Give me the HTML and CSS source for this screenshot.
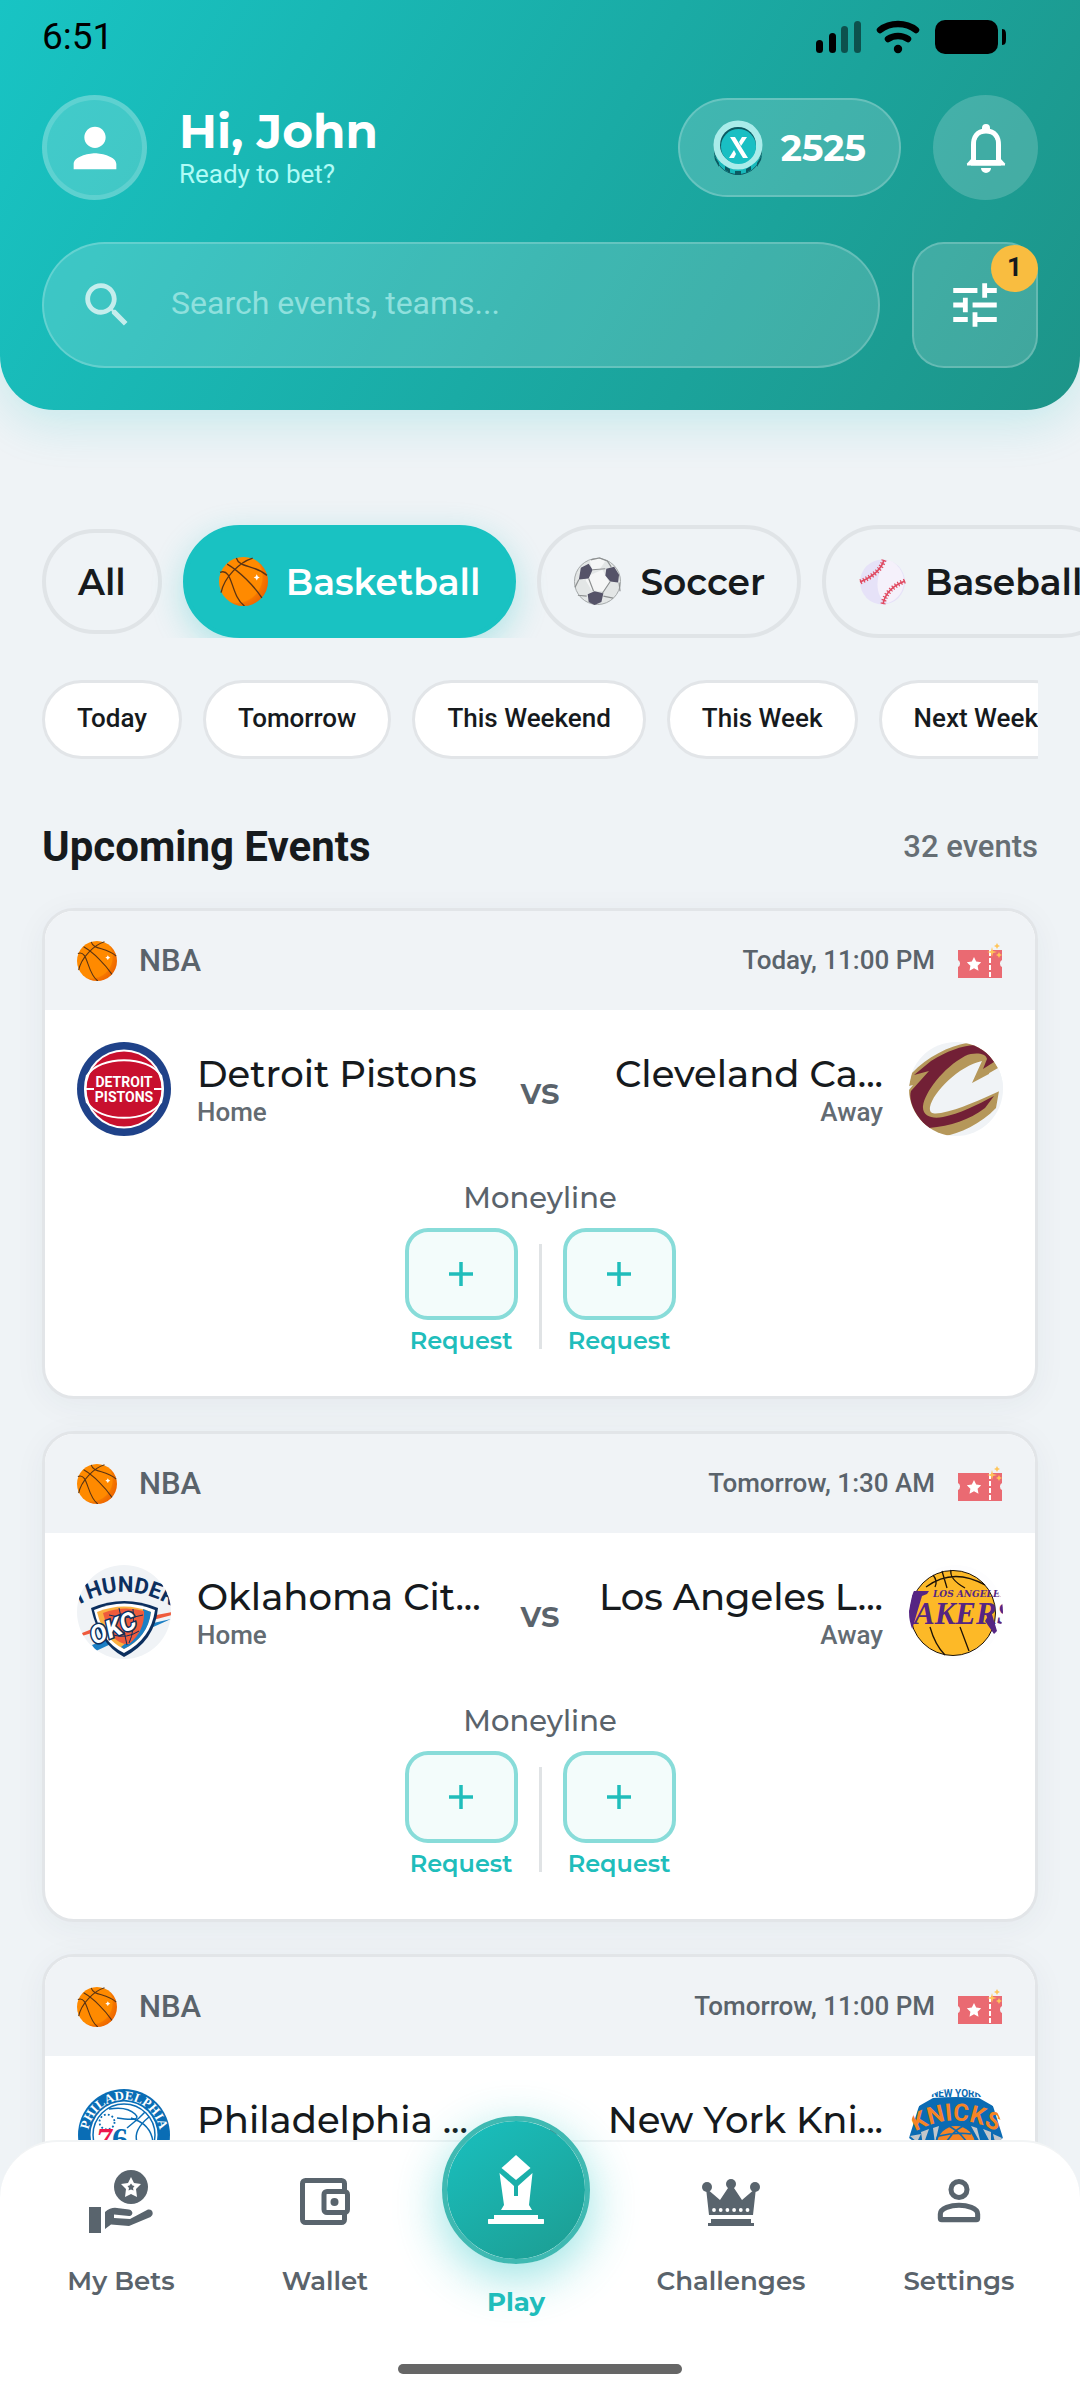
FILE: index.html
```html
<!DOCTYPE html>
<html lang="en">
<head>
<meta charset="utf-8">
<meta name="viewport" content="width=device-width, initial-scale=1">
<title>Upcoming Events</title>
<link rel="stylesheet" href="styles.css">
</head>
<body>
<svg class="sprite" aria-hidden="true">
  <defs>
    <radialGradient id="ballFill" cx="0.35" cy="0.4" r="0.75">
      <stop offset="0.7" stop-color="#ff8a00"/><stop offset="0.74" stop-color="#f57600"/><stop offset="0.9" stop-color="#ee6500"/><stop offset="1" stop-color="#dd5000"/>
    </radialGradient>
    <clipPath id="disc"><circle cx="47" cy="47" r="47"/></clipPath>
  </defs>
  <symbol id="basketball" viewBox="0 0 48 48">
    <circle cx="24" cy="24" r="24" fill="url(#ballFill)"/>
    <g fill="none" stroke="#5b3413" stroke-width="1.3">
      <path d="M8 7C20 14 34 28 42 40M33 1C20 5 5 20 2 35M1 15C14 10 11 38 25 48M17 1C20 11 34 7 47 18"/>
    </g>
    <path d="M37 17l1 2 2 1-2 1-1 2-1-2-2-1 2-1z" fill="#fff"/>
  </symbol>
  <symbol id="ticket" viewBox="0 0 46 36">
    <path d="M1 7h31v28H1v-11a4 4 0 0 0 0-7zM34 7h11v10a4 4 0 0 0 0 7v11H34z" fill="#ea6a72"/>
    <path d="M33 8v27" stroke="#ea6a72" stroke-width="2"/>
    <path d="M33 8v27" stroke="#fff" stroke-width="2" stroke-dasharray="5 2"/>
    <path d="M17 14l2.200 4.500 5 .7-3.600 3.500.9 5-4.500-2.400-4.500 2.400.9-5-3.600-3.500 5-.7z" fill="#fff"/>
    <path d="M35 4l1 4 4 1-4 1-1 4-1-4-4-1 4-1zM40 0l1 2 2 1-2 1-1 2-1-2-2-1 2-1zM42 9l1 2 2 1-2 1-1 2-1-2-2-1 2-1z" fill="#ffc55a"/>
  </symbol>
  <symbol id="plus" viewBox="0 0 26 26"><path d="M13 1v24M1 13h24" stroke="#20bdbb" stroke-width="3.500"/></symbol>
</svg>

<div class="app">
  <header class="header">
    <div class="status">
      <span class="clock">6:51</span>
      <div class="status-icons">
        <svg width="45" height="34" viewBox="0 0 45 34" aria-label="Signal"><rect x="0" y="20" width="7" height="13" rx="3.500"/><rect x="13" y="13" width="7" height="20" rx="3.500"/><g opacity=".5"><rect x="25" y="6" width="7" height="27" rx="3.500"/><rect x="38" y="1" width="7" height="32" rx="3.500"/></g></svg>
        <svg width="44" height="34" viewBox="0 0 44 34" aria-label="Wi-Fi"><path d="M4 10C14 2 30 2 40 10M12 19C18 15 26 15 32 19" fill="none" stroke="#000" stroke-width="6.500" stroke-linecap="round"/><circle cx="22" cy="29" r="4.200"/></svg>
        <svg width="71" height="34" viewBox="0 0 71 34" aria-label="Battery"><rect width="63" height="34" rx="10"/><path d="M67 9c4 0 4 3 4 8s0 8-4 8z"/></svg>
      </div>
    </div>
    <div class="profile">
      <button class="avatar" aria-label="Profile"><svg width="64" height="64" viewBox="0 0 24 24" fill="#fff"><path d="M12 12c2.210 0 4-1.790 4-4s-1.790-4-4-4-4 1.790-4 4 1.790 4 4 4zm0 2c-2.670 0-8 1.340-8 4v2h16v-2c0-2.660-5.330-4-8-4z"/></svg></button>
      <div class="greeting">
        <h1>Hi, John</h1>
        <p>Ready to bet?</p>
      </div>
      <button class="coins">
        <svg width="50" height="55" viewBox="0 0 50 55" aria-hidden="true">
          <path d="M1 27a24 25 0 0 0 48 0v3a24 25 0 0 1-48 0z" fill="#0b4f57"/>
          <path d="M1 35C6 48 14 54 25 54s19-6 24-19l-5 6H6z" fill="#17b9bb"/>
          <path d="M12 50l5 3v-4l-5-3zM22 51h6v4h-6zM38 50l-5 3v-4l5-3zM1 35l5 8v4L2 40zM49 35l-5 8v4l4-7z" fill="#0b5a62"/>
          <circle cx="25" cy="25" r="24.500" fill="#a9ecea"/>
          <circle cx="25" cy="25" r="18" fill="#0b5a62"/>
          <circle cx="25.500" cy="26.500" r="17.500" fill="#19bfc3"/>
          <path d="M17 17h5l13 21h-5zM29 17h5l-6 9-2-4zM16 38l5-8 2 4-2 4z" fill="#fff"/>
        </svg>
        <span>2525</span>
      </button>
      <button class="bell" aria-label="Notifications">
        <svg width="40" height="50" viewBox="0 0 40 50" fill="none"><path d="M20 8c-9 0-12.500 6-12.500 14v18h25V22C32.500 14 29 8 20 8z" stroke="#fff" stroke-width="5"/><path d="M1 42.500v-2L6 35h28l5 5.500v2z" fill="#fff"/><path d="M10 22c0-7 3-11 10-11s10 4 10 11v15H10z" fill="#40aca4"/><path d="M16 8V5a4 4 0 0 1 8 0v3zM15 45h10a5 5 0 0 1-10 0z" fill="#fff"/></svg>
      </button>
    </div>
    <div class="search-row">
      <label class="search">
        <svg width="58" height="58" viewBox="0 0 24 24" fill="#fff" aria-hidden="true"><path d="M15.500 14h-.79l-.28-.27C15.410 12.590 16 11.110 16 9.500 16 5.910 13.090 3 9.500 3S3 5.910 3 9.500 5.910 16 9.500 16c1.610 0 3.090-.59 4.230-1.570l.27.28v.79l5 4.990L20.490 19l-4.990-5zm-6 0C7.010 14 5 11.990 5 9.500S7.010 5 9.500 5 14 7.010 14 9.500 11.990 14 9.500 14z"/></svg>
        <input type="text" placeholder="Search events, teams..." aria-label="Search events, teams">
      </label>
      <button class="filter" aria-label="Filters">
        <svg width="58" height="58" viewBox="0 0 24 24" fill="#fff"><path d="M3 17v2h6v-2H3zM3 5v2h10V5H3zm10 16v-2h8v-2h-8v-2h-2v6h2zM7 9v2H3v2h4v2h2V9H7zm14 4v-2H11v2h10zm-6-4h2V7h4V5h-4V3h-2v6z"/></svg>
        <span class="badge">1</span>
      </button>
    </div>
  </header>

  <main class="main">
    <div class="sports">
      <button class="sport sport-all">All</button>
      <button class="sport sport-active"><svg width="49" height="49"><use href="#basketball"/></svg>Basketball</button>
      <button class="sport">
        <svg width="49" height="49" viewBox="0 0 48 50">
          <circle cx="24" cy="25" r="23.500" fill="#e3e6e6" stroke="#a3a7a8"/>
          <path d="M16 3l9-2 7 3-6 9-8-1zM13 20l16-7 7 13-6 9-12-1-6-10z" fill="#f5f6f6"/>
          <path d="M7 11l8-4 4 6-4 9-10 1zM33 12l8-2 5 8-1 8-8-1-5-6zM14 38l7-3 9 2-2 9-7 3-6-3z" fill="#555368"/>
          <path d="M19 13l13 -1M15 22l5 13M37 25l-8 12M5 23L1 31M13 40L4 39M46 26l1 9M30 40l10 2M17 3l9-2 8 3 4 6" fill="none" stroke="#8d9091" stroke-width="1.200"/>
        </svg>Soccer</button>
      <button class="sport">
        <svg width="49" height="49" viewBox="0 0 49 49">
          <circle cx="24.500" cy="25" r="22.500" fill="#e6e2f8"/><path d="M30 3a22.500 22.500 0 0 1 0 43C16 42 16 15 30 3z" fill="#f5f1fb"/>
          <g fill="none" stroke="#e04a61"><path d="M26 3C23 13 14 20 2 25M25 47C27 37 34 29 47 24" stroke-width="1.600"/><path d="M26 3C23 13 14 20 2 25M25 47C27 37 34 29 47 24" stroke-width="5" stroke-dasharray="1.200 2"/></g>
        </svg>Baseball</button>
    </div>

    <div class="dates">
      <button class="date">Today</button>
      <button class="date">Tomorrow</button>
      <button class="date">This Weekend</button>
      <button class="date">This Week</button>
      <button class="date">Next Week</button>
    </div>

    <div class="section-head">
      <h2>Upcoming Events</h2>
      <span>32 events</span>
    </div>

    <div class="events">
      <article class="card">
        <div class="card-head">
          <svg width="40" height="40"><use href="#basketball"/></svg>
          <span class="league">NBA</span>
          <time>Today, 11:00 PM</time>
          <svg width="46" height="36"><use href="#ticket"/></svg>
        </div>
        <div class="card-body">
          <div class="teams">
            <div class="team">
              <svg class="logo" viewBox="0 0 94 94" role="img" aria-label="Detroit Pistons">
                <circle cx="47" cy="47" r="47" fill="#1f4289"/><circle cx="47" cy="47" r="39.500" fill="#fff"/><circle cx="47" cy="47" r="37.500" fill="#c8102e"/>
                <path d="M10 34C22 13 72 13 84 34M10 60C22 81 72 81 84 60M10 33Q6 47 10 61M84 33Q88 47 84 61M9 47h8M77 47h8" fill="none" stroke="#fff" stroke-width="2"/>
                <text x="47" y="45" class="lg-pistons">DETROIT</text><text x="47" y="60" class="lg-pistons">PISTONS</text>
              </svg>
              <div class="team-text"><h3>Detroit Pistons</h3><p>Home</p></div>
            </div>
            <span class="vs">vs</span>
            <div class="team team-away">
              <div class="team-text"><h3>Cleveland Ca...</h3><p>Away</p></div>
              <svg class="logo" viewBox="0 0 94 94" role="img" aria-label="Cleveland Cavaliers">
                <g clip-path="url(#disc)"><rect width="94" height="94" fill="#f0f3f6"/>
                <path d="M2 35L3 31C18 15 40 4 58 1L67 2Q80 10 89 26L63 41L73 19L90 49L87 66C72 82 50 92 35 94L16 88C2 76-3 58 0 48L4 43L0 44Z" fill="#b5975a"/>
                <path d="M5 33L22 19C38 9 52 4 66 3L78 10L85 20L74 27L78 17C77 11 65 10 56 14C34 26 16 50 14 64C13 75 24 77 34 75C50 72 68 63 85 54L76 66C60 78 42 84 20 86C6 75-1 58 2 49L20 29Z" fill="#722036"/>
                <path d="M73 19C50 24 24 50 21 65C20 72 25 72 32 71C52 67 70 58 95 47L95 24L63 41Z" fill="#f0f3f6"/></g>
              </svg>
            </div>
          </div>
          <p class="market">Moneyline</p>
          <div class="odds">
            <div class="odd"><button aria-label="Request home odds"><svg width="26" height="26"><use href="#plus"/></svg></button><span>Request</span></div>
            <div class="divider"></div>
            <div class="odd"><button aria-label="Request away odds"><svg width="26" height="26"><use href="#plus"/></svg></button><span>Request</span></div>
          </div>
        </div>
      </article>

      <article class="card">
        <div class="card-head">
          <svg width="40" height="40"><use href="#basketball"/></svg>
          <span class="league">NBA</span>
          <time>Tomorrow, 1:30 AM</time>
          <svg width="46" height="36"><use href="#ticket"/></svg>
        </div>
        <div class="card-body">
          <div class="teams">
            <div class="team">
              <svg class="logo" viewBox="0 0 94 94" role="img" aria-label="Oklahoma City Thunder">
                <g clip-path="url(#disc)"><rect width="94" height="94" fill="#f0f3f6"/>
                <path id="arcT" d="M-8 46Q47 8 102 46" fill="none"/>
                <text class="lg-thunder"><textPath href="#arcT" startOffset="50%">THUNDER</textPath></text>
                <path d="M5 68L20 62L18 67L5 71zM74 51L95 47V50L76 55z" fill="#ef5b3c"/><path d="M15 80L40 70L36 78L19 86zM72 59L94 54L74 63z" fill="#1b7fc4"/>
                <path d="M14 43Q47 29 81 43Q78 76 47 92Q22 79 14 43z" fill="#0c2f5e"/><path d="M17 45Q47 32 78 45Q74 74 47 88Q24 77 17 45z" fill="#fff"/>
                <path d="M20 47Q47 36 74 47Q70 73 47 84Q27 75 20 47z" fill="#fbb040"/><path d="M66 44L74 47Q71 72 47 84L44 82Q66 66 66 44z" fill="#1b7fc4"/>
                <path d="M26 48Q46 40 67 46Q68 66 52 79Q44 80 36 72Q29 60 26 48z" fill="#ef5b3c"/>
                <path d="M42 43L50 80M32 50Q50 55 66 50M56 44Q58 66 52 78M36 70Q50 74 62 66" stroke="#0c2f5e" fill="none"/>
                <text x="17" y="80" class="lg-okc" transform="rotate(-22 17 80)">OKC</text></g>
              </svg>
              <div class="team-text"><h3>Oklahoma Cit...</h3><p>Home</p></div>
            </div>
            <span class="vs">vs</span>
            <div class="team team-away">
              <div class="team-text"><h3>Los Angeles L...</h3><p>Away</p></div>
              <svg class="logo" viewBox="0 0 94 94" role="img" aria-label="Los Angeles Lakers">
                <g clip-path="url(#disc)"><rect width="94" height="94" fill="#fdfdfe"/>
                <circle cx="44" cy="48" r="42.500" fill="#fdb927" stroke="#1c1208"/>
                <path d="M17 22Q44 2 76 20M24 10Q29 16 26 22M33 6L38 23M42 5Q40 14 56 23M21 62Q26 80 36 90M51 62L60 86" fill="none" stroke="#1c1208" stroke-width="1.300"/>
                <path d="M4 26h16l-2 3-5 2L2 68l-5-8zM82 46l6 20-3 3-9-13z" fill="#552583"/>
                <text x="5" y="59" class="lg-lakers">AKERS</text><text x="24" y="32" class="lg-la">LOS ANGELES</text></g>
              </svg>
            </div>
          </div>
          <p class="market">Moneyline</p>
          <div class="odds">
            <div class="odd"><button aria-label="Request home odds"><svg width="26" height="26"><use href="#plus"/></svg></button><span>Request</span></div>
            <div class="divider"></div>
            <div class="odd"><button aria-label="Request away odds"><svg width="26" height="26"><use href="#plus"/></svg></button><span>Request</span></div>
          </div>
        </div>
      </article>

      <article class="card">
        <div class="card-head">
          <svg width="40" height="40"><use href="#basketball"/></svg>
          <span class="league">NBA</span>
          <time>Tomorrow, 11:00 PM</time>
          <svg width="46" height="36"><use href="#ticket"/></svg>
        </div>
        <div class="card-body">
          <div class="teams">
            <div class="team">
              <svg class="logo" viewBox="0 0 94 94" role="img" aria-label="Philadelphia 76ers">
                <circle cx="47" cy="47" r="46" fill="#0a6db5"/><circle cx="47" cy="47" r="33.500" fill="#fff"/><circle cx="47" cy="47" r="31" fill="none" stroke="#0a6db5" stroke-width="1.500"/>
                <path id="arcP" d="M11.500 54A36 36 0 1 1 82.500 54" fill="none"/>
                <text class="lg-phila"><textPath href="#arcP" startOffset="50%">PHILADELPHIA</textPath></text>
                <path d="M32 21Q50 18 58 26T40 30M72 29Q56 42 60 54M54 30Q74 36 76 54M50 40L62 30L68 24" fill="none" stroke="#0a6db5" stroke-width="1.500"/>
                <circle cx="30" cy="34" r="7.500" fill="none" stroke="#0a6db5" stroke-width="1.800" stroke-dasharray="1.800 2.200"/>
                <text x="19" y="62" class="lg-seven">7</text><text x="35" y="62" class="lg-six">6</text><text x="54" y="62" class="lg-ers">ers</text>
              </svg>
              <div class="team-text"><h3>Philadelphia ...</h3><p>Home</p></div>
            </div>
            <span class="vs">vs</span>
            <div class="team team-away">
              <div class="team-text"><h3>New York Kni...</h3><p>Away</p></div>
              <svg class="logo" viewBox="0 0 94 94" role="img" aria-label="New York Knicks">
                <g clip-path="url(#disc)">
                <path d="M0 50L10 18L24 10Q47 8 70 10L84 18L94 50L80 60H14z" fill="#0b6bb3"/>
                <path d="M1 48L8 54L12 46zM12 44l8-3-6 17zM24 40l6-2-4 18zM62 38l6 2 4 16zM74 41l8 3 0 12zM84 46l9 4-6 8z" fill="#c2c6ca"/>
                <path id="arcK" d="M-4 50Q47 15 98 50" fill="none"/>
                <text class="lg-knicks"><textPath href="#arcK" startOffset="50%">KNICKS</textPath></text>
                <text x="47" y="9" class="lg-ny">NEW YORK</text>
                <circle cx="47" cy="57" r="20" fill="#f58426" stroke="#0b6bb3" stroke-width="2"/>
                <path d="M30 48Q46 44 62 46M40 38Q54 46 60 58M54 38Q42 44 34 60" fill="none" stroke="#0b6bb3" stroke-width="1.500"/></g>
              </svg>
            </div>
          </div>
          <p class="market">Moneyline</p>
          <div class="odds">
            <div class="odd"><button aria-label="Request home odds"><svg width="26" height="26"><use href="#plus"/></svg></button><span>Request</span></div>
            <div class="divider"></div>
            <div class="odd"><button aria-label="Request away odds"><svg width="26" height="26"><use href="#plus"/></svg></button><span>Request</span></div>
          </div>
        </div>
      </article>
    </div>
  </main>

  <nav class="tabs">
    <div class="tab-grid">
      <a class="tab" href="#bets">
        <svg width="64" height="64" viewBox="0 0 64 64" fill="#59646d"><circle cx="42" cy="17" r="17"/><path d="M42 7l3 6 7 1-5 5 1 8-6-3-6 3 1-8-5-5 7-1z" fill="#fff"/><path d="M42 13.500l1.500 2 2 .5-1.500 2 .5 2.500-2.500-1-2.500 1 .5-2.500-1.500-2 2-.5z"/><path d="M0 37h12v26H0zM16 59V42q6-5 12-4l12 1.500c5 1 4 7 0 6.500l-15-1.500v3.500l16 1 17-9c5-2 8 4 3.500 7L40 56l-18-1.500z"/></svg>
        <span>My Bets</span>
      </a>
      <a class="tab" href="#wallet">
        <svg width="50" height="64" viewBox="0 -8 50 64" fill="none" stroke="#59646d" stroke-width="5"><path d="M44.500 12V5.500a3 3 0 0 0-3-3h-36a3 3 0 0 0-3 3v36a3 3 0 0 0 3 3h36a3 3 0 0 0 3-3V36"/><rect x="24" y="13.500" width="23.500" height="21" rx="3"/><circle cx="34.500" cy="24" r="4" fill="#59646d" stroke="none"/></svg>
        <span>Wallet</span>
      </a>
      <a class="tab tab-play" href="#play">
        <div class="play-disc"><svg width="56" height="70" viewBox="0 0 56 70" fill="#fff"><path d="M28 0l14.500 13L28 25 13.500 13z"/><path d="M11.500 18L26 31v10h4V31l14.500-13L41 50l3 5H13l3-5z"/><path d="M6 60h44v4h5a2.500 2.500 0 0 1 0 5H1a2.500 2.500 0 0 1 0-5h5z"/></svg></div>
        <span>Play</span>
      </a>
      <a class="tab" href="#challenges">
        <svg width="58" height="64" viewBox="0 -9 58 64" fill="#59646d"><circle cx="5" cy="8" r="5"/><circle cx="29" cy="5" r="5"/><circle cx="53" cy="8" r="5"/><path d="M4 9l14 12L28 6h2l10 15L54 9l-3 27H7z"/><path d="M9 40h40v4h3v3H6v-3h3z"/><path d="M12 31h36" stroke="#fff" stroke-width="3.800" stroke-linecap="round" stroke-dasharray="0 6.700"/></svg>
        <span>Challenges</span>
      </a>
      <a class="tab" href="#settings">
        <svg width="64" height="64" viewBox="0 0 24 24" fill="none" stroke="#59646d" stroke-width="1.900"><circle cx="12" cy="7.300" r="3"/><path d="M5 16.500c0-2.200 4-3.300 7-3.300s7 1.100 7 3.300v1.600a.5.5 0 0 1-.5.5h-13a.5.5 0 0 1-.5-.5z"/></svg>
        <span>Settings</span>
      </a>
    </div>
    <div class="home-bar"></div>
  </nav>
</div>
</body>
</html>
```
FILE: styles.css
```css
* { box-sizing: border-box; margin: 0; padding: 0; }

:root {
  --ink: #161a1d;
  --muted: #5a636b;
  --teal: #19c2c2;
  --line: #e0e4e7;
  --bg: #eff3f6;
  --display: Montserrat, Inter, "Open Sans", sans-serif;
  --text: Roboto, "Noto Sans", sans-serif;
}

body { background: var(--bg); color: var(--ink); font-family: var(--text); }
button { border: 0; background: none; font: inherit; color: inherit; display: flex; align-items: center; justify-content: center; flex: none; }
a { color: inherit; text-decoration: none; }
svg { display: block; flex: none; }
.sprite { position: absolute; width: 0; height: 0; }

.app { position: relative; height: 100vh; overflow: hidden; }

/* Header */
.header {
  position: relative;
  padding: 0 42px 42px;
  border-radius: 0 0 54px 54px;
  background: linear-gradient(120deg, #18c4c4 0%, #1aaba5 52%, #1d9488 100%);
  box-shadow: 0 12px 48px rgba(25, 194, 194, .2);
}
.status { display: flex; justify-content: space-between; height: 95px; padding-top: 16px; color: #000; }
.clock { font-size: 37px; line-height: 42px; }
.status-icons { display: flex; gap: 15px; padding: 4px 32px 0 0; }

.profile { display: flex; align-items: center; gap: 32px; }
.avatar, .bell { width: 105px; height: 105px; border-radius: 50%; background: rgba(255, 255, 255, .18); }
.avatar { border: 5px solid rgba(255, 255, 255, .15); }
.greeting { flex: 1; color: #fff; }
.greeting h1 { font: 700 47px/52px var(--display); }
.greeting p { font-size: 26px; line-height: 32px; color: #b0fbf6; }
.coins {
  height: 99px; padding: 0 33px; gap: 18px; border-radius: 50px;
  background: rgba(255, 255, 255, .17); border: 2px solid rgba(255, 255, 255, .2);
  color: #fff; font: 700 36px/44px var(--display);
}

.search-row { display: flex; gap: 32px; margin-top: 42px; }
.search {
  flex: 1; display: flex; align-items: center; gap: 35px; height: 126px; padding: 0 34px; border-radius: 63px;
  background: rgba(255, 255, 255, .16); border: 2px solid rgba(255, 255, 255, .2);
}
.search svg { opacity: .7; }
.search input { flex: 1; min-width: 0; padding-bottom: 4px; border: 0; background: none; outline: 0; color: #fff; font: 400 32px/40px var(--text); }
.search input::placeholder { color: #8fe0dd; opacity: 1; }
.filter {
  position: relative; width: 126px; height: 126px; border-radius: 32px;
  background: rgba(255, 255, 255, .16); border: 2px solid rgba(255, 255, 255, .2);
}
.badge {
  position: absolute; top: 1px; right: -2px; width: 47px; height: 47px; border-radius: 50%;
  background: #f9bd40; color: var(--ink); font-size: 26px; font-weight: 700; line-height: 45px; text-align: center;
}

/* Filters */
.sports { display: flex; align-items: center; gap: 21px; padding: 115px 0 0 42px; overflow: hidden; }
.sport {
  height: 113px; padding: 0 32px; gap: 18px; border: 4px solid var(--line); border-radius: 57px;
  font: 600 36px/44px var(--display); white-space: nowrap;
}
.sport-all { height: 105px; }
.sport-active { background: #19c2c2; border-color: #19c2c2; color: #fff; box-shadow: 0 10px 32px rgba(25, 194, 194, .3); }

.dates { display: flex; gap: 21px; margin: 42px 42px 0; overflow: hidden; }
.date {
  height: 79px; padding: 0 32px 4px; border: 3px solid #e2e5e8; border-radius: 40px; background: #fff;
  font-size: 26px; font-weight: 500; line-height: 32px; white-space: nowrap;
}

.section-head { display: flex; align-items: center; justify-content: space-between; margin: 63px 42px 36px; }
.section-head h2 { font-size: 42px; font-weight: 700; line-height: 50px; }
.section-head span { font-size: 31px; font-weight: 500; line-height: 50px; color: #666e74; }

/* Event cards */
.events { display: flex; flex-direction: column; gap: 32px; padding: 0 42px; }
.card { border: 3px solid #e2e5e8; border-radius: 32px; background: #fff; overflow: hidden; box-shadow: 0 6px 32px rgba(40, 60, 80, .05); }
.card-head { display: flex; align-items: center; gap: 22px; height: 99px; padding: 0 32px; background: #f0f3f6; color: var(--muted); font-weight: 500; }
.league { flex: 1; font-size: 31px; }
.card-head time { font-size: 26px; padding-bottom: 2px; }
.card-body { padding: 32px 32px 40px; }
.teams { display: flex; align-items: center; }
.team { flex: 1; display: flex; align-items: center; gap: 26px; min-width: 0; }
.team-away { justify-content: flex-end; text-align: right; }
.team h3 { font: 500 37px/46px var(--display); white-space: nowrap; }
.team p { font-size: 26px; font-weight: 500; line-height: 30px; color: #636b72; }
.logo { width: 94px; height: 94px; }
.vs { padding-top: 4px; font: 600 36px/40px var(--display); color: var(--muted); }
.market { margin-top: 44px; text-align: center; font: 500 29px/36px var(--display); color: var(--muted); }
.odds { display: flex; justify-content: center; gap: 21px; margin-top: 12px; }
.odd { display: flex; flex-direction: column; align-items: center; gap: 6px; width: 113px; }
.odd button { width: 113px; height: 92px; border: 4px solid #88dcd9; border-radius: 23px; background: #f3fcfb; }
.odd span { font: 600 24px/30px var(--display); color: #20bdbb; }
.divider { width: 3px; height: 105px; margin-top: 16px; background: #e0e3e5; }

/* Lettering inside team logos */
.lg-pistons { font: 700 14px Roboto, sans-serif; fill: #fff; text-anchor: middle; }
.lg-thunder { font: 700 22px Roboto, sans-serif; fill: #0c2f5e; text-anchor: middle; }
.lg-okc { font: italic 700 25px Roboto, sans-serif; fill: #fff; stroke: #0c2f5e; stroke-width: 3px; paint-order: stroke; }
.lg-lakers { font: italic 700 31px "Liberation Serif", serif; fill: #552583; }
.lg-la { font: italic 700 9px "DejaVu Serif", serif; fill: #552583; }
.lg-phila { font: 700 13px "Liberation Serif", serif; fill: #fff; text-anchor: middle; }
.lg-seven { font: italic 700 32px "Liberation Serif", serif; fill: #ed174c; }
.lg-six { font: 700 32px "Liberation Serif", serif; fill: #0a6db5; }
.lg-ers { font: 700 16px "Liberation Serif", serif; fill: #0a6db5; }
.lg-knicks { font: 700 24px Roboto, sans-serif; fill: #f58426; text-anchor: middle; }
.lg-ny { font: 700 10px Roboto, sans-serif; fill: #0b6bb3; text-anchor: middle; }

/* Bottom tabs */
.tabs {
  position: absolute; left: 0; right: 0; bottom: 0;
  padding: 28px 19px 26px; border-top: 2px solid #f2f4f5; border-radius: 58px 58px 0 0;
  background: #fff;
}
.tab-grid { display: grid; grid-template-columns: 204fr 204fr 178fr 252fr 204fr; }
.tab { display: flex; flex-direction: column; align-items: center; gap: 31px; color: var(--muted); font: 600 26px/32px var(--display); }
.tab-play { gap: 22px; margin-top: -54px; color: #20bdbb; font-weight: 700; }
.play-disc {
  display: grid; place-items: center; width: 148px; height: 148px; border-radius: 50%;
  border: 5px solid #3fb9b2; background: linear-gradient(145deg, #19c0bf, #1d9c91) padding-box;
  box-shadow: 0 14px 48px rgba(25, 194, 194, .45);
}
.home-bar { width: 284px; height: 10px; margin: 46px auto 0; border-radius: 5px; background: #666; }
```
